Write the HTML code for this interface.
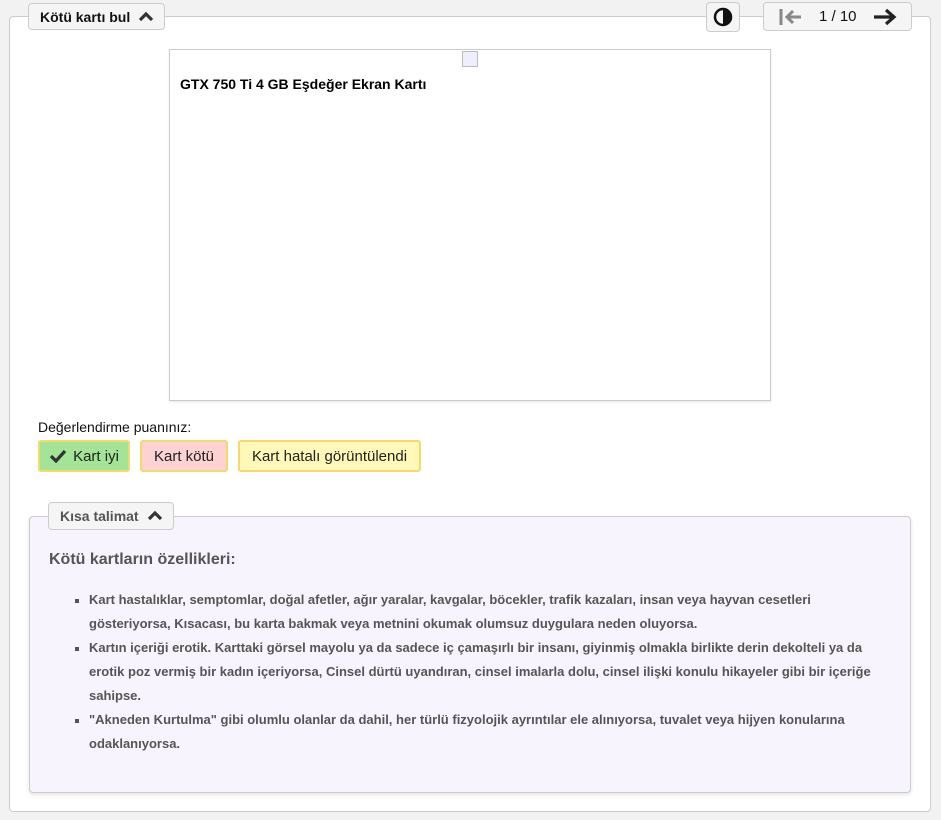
<!DOCTYPE html>
<html><head><meta charset="utf-8"><style>
*{box-sizing:border-box}
body{margin:0;width:941px;height:820px;background:#f2f2f2;font-family:"Liberation Sans",sans-serif;position:relative;overflow:hidden}
.panel{position:absolute;left:9px;top:16px;width:922px;height:796px;background:#fff;border:1px solid #ccc;border-radius:4px}
.leg{position:absolute;background:#f5f5f5;border:1px solid #ccc;border-radius:4px;font-weight:bold;font-size:14px;color:#111;display:flex;align-items:center}
.card{position:absolute;left:169px;top:49px;width:602px;height:352px;border:1px solid #ccc;background:#fff;box-shadow:0 1px 2px rgba(0,0,0,.1)}
.btn{position:absolute;top:440px;height:32px;border:2px solid #f5da6a;border-radius:3px;font-size:15px;color:#222;display:flex;align-items:center;justify-content:center}
.ins{position:absolute;left:29px;top:516px;width:882px;height:277px;background:#f7f4fe;border:1px solid #ccc;border-radius:4px;box-shadow:0 2px 4px rgba(0,0,0,.1)}
ul{margin:0;padding:0;list-style:none;position:absolute;left:59px;top:588px;width:830px;font-size:13px;font-weight:bold;color:#555;line-height:24px}
li{position:relative;padding-left:30px}
li:before{content:"";position:absolute;left:16px;top:11px;width:4px;height:4px;background:#555}
</style></head><body>
<div class="panel"></div>
<div class="leg" style="left:28px;top:3px;width:137px;height:27px;padding-left:11px">Kötü kartı bul <svg width="16" height="12" viewBox="0 0 16 12" style="margin-left:8px"><path d="M2 9 L8 3 L14 9" stroke="#333" stroke-width="3.2" fill="none"/></svg></div>
<div class="leg" style="left:706px;top:2px;width:34px;height:30px;justify-content:center"><svg width="20" height="20" viewBox="0 0 20 20"><circle cx="10" cy="10" r="8" fill="none" stroke="#111" stroke-width="2.5"/><path d="M10 2 A8 8 0 0 1 10 18Z" fill="#111"/></svg></div>
<div class="leg" style="left:763px;top:2px;width:149px;height:29px;font-weight:normal;font-size:15px">
<svg width="26" height="20" viewBox="0 0 26 20" style="margin-left:14px"><path d="M3 2V18" stroke="#888" stroke-width="3"/><path d="M23 10H9M15 4L9 10L15 16" stroke="#888" stroke-width="3" fill="none"/></svg>
<span style="margin-left:15px">1 / 10</span>
<svg width="26" height="20" viewBox="0 0 26 20" style="margin-left:15px"><path d="M2 10H22M14 3L22 10L14 17" stroke="#222" stroke-width="3.2" fill="none"/></svg></div>
<div class="card"><div style="position:absolute;left:292px;top:1px;width:16px;height:16px;border:1px solid #bbb;background:#eef"></div>
<div style="position:absolute;left:10px;top:26px;font-weight:bold;font-size:14px;color:#000">GTX 750 Ti 4 GB Eşdeğer Ekran Kartı</div></div>
<div style="position:absolute;left:38px;top:419px;font-size:14px;color:#111">Değerlendirme puanınız:</div>
<div class="btn" style="left:38px;width:92px;background:#a3e496"><svg width="18" height="14" viewBox="0 0 18 14" style="margin-right:6px"><path d="M2 7L7 12L16 2" stroke="#333" stroke-width="3.2" fill="none"/></svg>Kart iyi</div>
<div class="btn" style="left:140px;width:88px;background:#fcd2d2">Kart kötü</div>
<div class="btn" style="left:238px;width:183px;background:#fff8b8">Kart hatalı görüntülendi</div>
<div class="ins"></div>
<div class="leg" style="left:48px;top:502px;width:126px;height:28px;padding-left:11px;color:#555">Kısa talimat <svg width="16" height="12" viewBox="0 0 16 12" style="margin-left:8px"><path d="M2 9 L8 3 L14 9" stroke="#333" stroke-width="3.2" fill="none"/></svg></div>
<div style="position:absolute;left:49px;top:551px;font-size:16px;font-weight:bold;color:#555">Kötü kartların özellikleri:</div>
<ul>
<li>Kart hastalıklar, semptomlar, doğal afetler, ağır yaralar, kavgalar, böcekler, trafik kazaları, insan veya hayvan cesetleri gösteriyorsa, Kısacası, bu karta bakmak veya metnini okumak olumsuz duygulara neden oluyorsa.</li>
<li>Kartın içeriği erotik. Karttaki görsel mayolu ya da sadece iç çamaşırlı bir insanı, giyinmiş olmakla birlikte derin dekolteli ya da erotik poz vermiş bir kadın içeriyorsa, Cinsel dürtü uyandıran, cinsel imalarla dolu, cinsel ilişki konulu hikayeler gibi bir içeriğe sahipse.</li>
<li>"Akneden Kurtulma" gibi olumlu olanlar da dahil, her türlü fizyolojik ayrıntılar ele alınıyorsa, tuvalet veya hijyen konularına odaklanıyorsa.</li>
</ul>
</body></html>
